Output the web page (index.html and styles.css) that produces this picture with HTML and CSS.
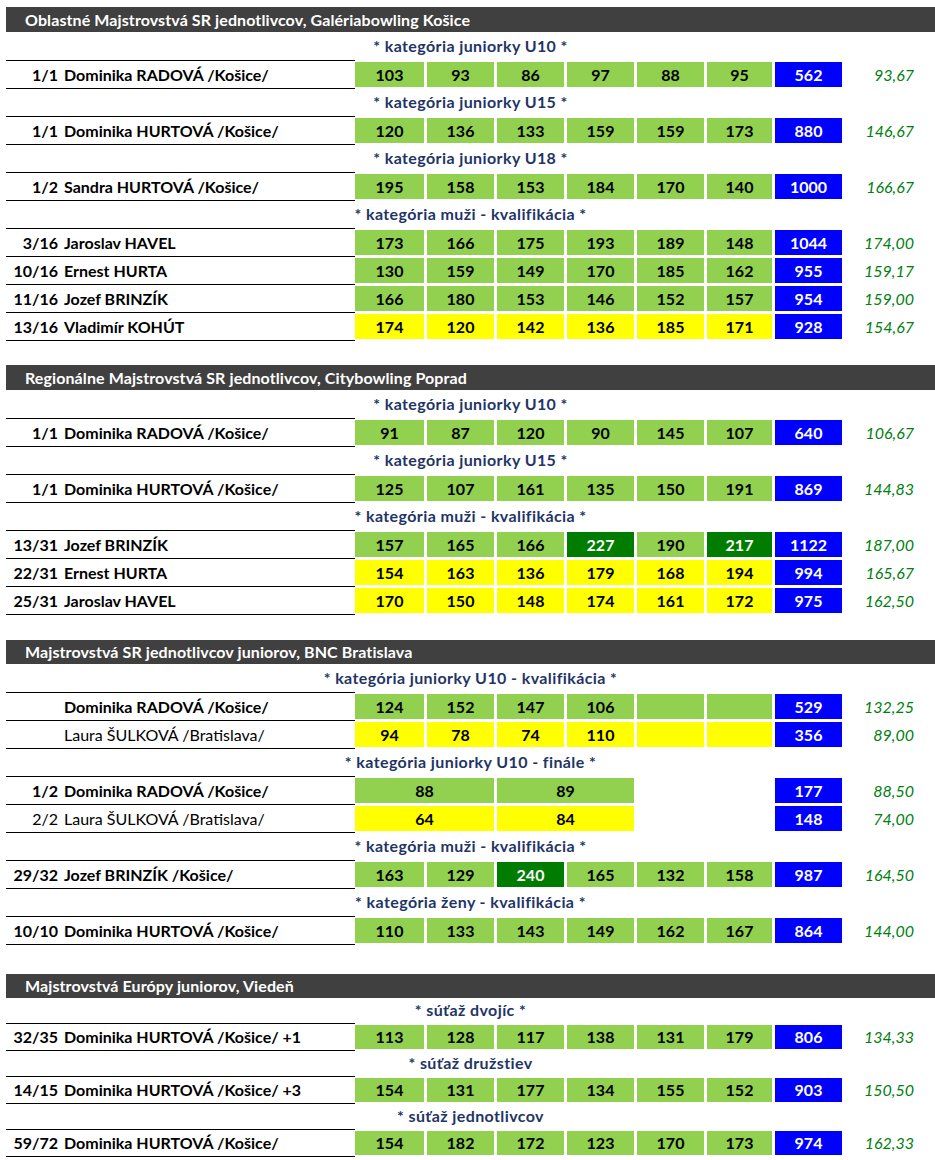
FILE: index.html
```html
<!DOCTYPE html>
<html lang="sk">
<head>
<meta charset="utf-8">
<title>Výsledky</title>
<link rel="stylesheet" href="styles.css">
</head>
<body>
<main class="page">

<section class="event">
  <h2 class="title">Oblastné Majstrovstvá SR jednotlivcov, Galériabowling Košice</h2>
  <div class="cat">* kategória juniorky U10 *</div>
  <div class="row"><div class="name"><span class="rank">1/1</span><span>Dominika RADOVÁ /Košice/</span></div>
    <span class="c g">103</span><span class="c g">93</span><span class="c g">86</span><span class="c g">97</span><span class="c g">88</span><span class="c g">95</span><span class="c sum">562</span><span class="avg">93,67</span></div>
  <div class="cat">* kategória juniorky U15 *</div>
  <div class="row"><div class="name"><span class="rank">1/1</span><span>Dominika HURTOVÁ /Košice/</span></div>
    <span class="c g">120</span><span class="c g">136</span><span class="c g">133</span><span class="c g">159</span><span class="c g">159</span><span class="c g">173</span><span class="c sum">880</span><span class="avg">146,67</span></div>
  <div class="cat">* kategória juniorky U18 *</div>
  <div class="row"><div class="name"><span class="rank">1/2</span><span>Sandra HURTOVÁ /Košice/</span></div>
    <span class="c g">195</span><span class="c g">158</span><span class="c g">153</span><span class="c g">184</span><span class="c g">170</span><span class="c g">140</span><span class="c sum">1000</span><span class="avg">166,67</span></div>
  <div class="cat">* kategória muži - kvalifikácia *</div>
  <div class="row"><div class="name"><span class="rank">3/16</span><span>Jaroslav HAVEL</span></div>
    <span class="c g">173</span><span class="c g">166</span><span class="c g">175</span><span class="c g">193</span><span class="c g">189</span><span class="c g">148</span><span class="c sum">1044</span><span class="avg">174,00</span></div>
  <div class="row"><div class="name"><span class="rank">10/16</span><span>Ernest HURTA</span></div>
    <span class="c g">130</span><span class="c g">159</span><span class="c g">149</span><span class="c g">170</span><span class="c g">185</span><span class="c g">162</span><span class="c sum">955</span><span class="avg">159,17</span></div>
  <div class="row"><div class="name"><span class="rank">11/16</span><span>Jozef BRINZÍK</span></div>
    <span class="c g">166</span><span class="c g">180</span><span class="c g">153</span><span class="c g">146</span><span class="c g">152</span><span class="c g">157</span><span class="c sum">954</span><span class="avg">159,00</span></div>
  <div class="row"><div class="name"><span class="rank">13/16</span><span>Vladimír KOHÚT</span></div>
    <span class="c y">174</span><span class="c y">120</span><span class="c y">142</span><span class="c y">136</span><span class="c y">185</span><span class="c y">171</span><span class="c sum">928</span><span class="avg">154,67</span></div>
</section>

<section class="event">
  <h2 class="title">Regionálne Majstrovstvá SR jednotlivcov, Citybowling Poprad</h2>
  <div class="cat">* kategória juniorky U10 *</div>
  <div class="row"><div class="name"><span class="rank">1/1</span><span>Dominika RADOVÁ /Košice/</span></div>
    <span class="c g">91</span><span class="c g">87</span><span class="c g">120</span><span class="c g">90</span><span class="c g">145</span><span class="c g">107</span><span class="c sum">640</span><span class="avg">106,67</span></div>
  <div class="cat">* kategória juniorky U15 *</div>
  <div class="row"><div class="name"><span class="rank">1/1</span><span>Dominika HURTOVÁ /Košice/</span></div>
    <span class="c g">125</span><span class="c g">107</span><span class="c g">161</span><span class="c g">135</span><span class="c g">150</span><span class="c g">191</span><span class="c sum">869</span><span class="avg">144,83</span></div>
  <div class="cat">* kategória muži - kvalifikácia *</div>
  <div class="row"><div class="name"><span class="rank">13/31</span><span>Jozef BRINZÍK</span></div>
    <span class="c g">157</span><span class="c g">165</span><span class="c g">166</span><span class="c dg">227</span><span class="c g">190</span><span class="c dg">217</span><span class="c sum">1122</span><span class="avg">187,00</span></div>
  <div class="row"><div class="name"><span class="rank">22/31</span><span>Ernest HURTA</span></div>
    <span class="c y">154</span><span class="c y">163</span><span class="c y">136</span><span class="c y">179</span><span class="c y">168</span><span class="c y">194</span><span class="c sum">994</span><span class="avg">165,67</span></div>
  <div class="row"><div class="name"><span class="rank">25/31</span><span>Jaroslav HAVEL</span></div>
    <span class="c y">170</span><span class="c y">150</span><span class="c y">148</span><span class="c y">174</span><span class="c y">161</span><span class="c y">172</span><span class="c sum">975</span><span class="avg">162,50</span></div>
</section>

<section class="event event--third">
  <h2 class="title">Majstrovstvá SR jednotlivcov juniorov, BNC Bratislava</h2>
  <div class="cat">* kategória juniorky U10 - kvalifikácia *</div>
  <div class="row"><div class="name"><span class="rank"></span><span>Dominika RADOVÁ /Košice/</span></div>
    <span class="c g">124</span><span class="c g">152</span><span class="c g">147</span><span class="c g">106</span><span class="c g"></span><span class="c g"></span><span class="c sum">529</span><span class="avg">132,25</span></div>
  <div class="row"><div class="name name--plain"><span class="rank"></span><span>Laura ŠULKOVÁ /Bratislava/</span></div>
    <span class="c y">94</span><span class="c y">78</span><span class="c y">74</span><span class="c y">110</span><span class="c y"></span><span class="c y"></span><span class="c sum">356</span><span class="avg">89,00</span></div>
  <div class="cat">* kategória juniorky U10 - finále *</div>
  <div class="row"><div class="name"><span class="rank">1/2</span><span>Dominika RADOVÁ /Košice/</span></div>
    <span class="c g span2">88</span><span class="c g span2">89</span><span class="c blank span2"></span><span class="c sum">177</span><span class="avg">88,50</span></div>
  <div class="row"><div class="name name--plain"><span class="rank">2/2</span><span>Laura ŠULKOVÁ /Bratislava/</span></div>
    <span class="c y span2">64</span><span class="c y span2">84</span><span class="c blank span2"></span><span class="c sum">148</span><span class="avg">74,00</span></div>
  <div class="cat">* kategória muži - kvalifikácia *</div>
  <div class="row"><div class="name"><span class="rank">29/32</span><span>Jozef BRINZÍK /Košice/</span></div>
    <span class="c g">163</span><span class="c g">129</span><span class="c dg">240</span><span class="c g">165</span><span class="c g">132</span><span class="c g">158</span><span class="c sum">987</span><span class="avg">164,50</span></div>
  <div class="cat">* kategória ženy - kvalifikácia *</div>
  <div class="row"><div class="name"><span class="rank">10/10</span><span>Dominika HURTOVÁ /Košice/</span></div>
    <span class="c g">110</span><span class="c g">133</span><span class="c g">143</span><span class="c g">149</span><span class="c g">162</span><span class="c g">167</span><span class="c sum">864</span><span class="avg">144,00</span></div>
</section>

<section class="event event--compact">
  <h2 class="title">Majstrovstvá Európy juniorov, Viedeň</h2>
  <div class="cat">* súťaž dvojíc *</div>
  <div class="row"><div class="name"><span class="rank">32/35</span><span>Dominika HURTOVÁ /Košice/ +1</span></div>
    <span class="c g">113</span><span class="c g">128</span><span class="c g">117</span><span class="c g">138</span><span class="c g">131</span><span class="c g">179</span><span class="c sum">806</span><span class="avg">134,33</span></div>
  <div class="cat">* súťaž družstiev</div>
  <div class="row"><div class="name"><span class="rank">14/15</span><span>Dominika HURTOVÁ /Košice/ +3</span></div>
    <span class="c g">154</span><span class="c g">131</span><span class="c g">177</span><span class="c g">134</span><span class="c g">155</span><span class="c g">152</span><span class="c sum">903</span><span class="avg">150,50</span></div>
  <div class="cat">* súťaž jednotlivcov</div>
  <div class="row"><div class="name"><span class="rank">59/72</span><span>Dominika HURTOVÁ /Košice/</span></div>
    <span class="c g">154</span><span class="c g">182</span><span class="c g">172</span><span class="c g">123</span><span class="c g">170</span><span class="c g">173</span><span class="c sum">974</span><span class="avg">162,33</span></div>
</section>

</main>
</body>
</html>
```

FILE: styles.css
```css
html, body {
  margin: 0;
  padding: 0;
  background: #ffffff;
}

body {
  font-family: "Lato", "DejaVu Sans", sans-serif;
  font-size: 16px;
  color: #000000;
}

.page {
  padding: 7px 0 0 6px;
  width: 929px;
}

.event + .event {
  margin-top: 24px;
}

.event--third {
  margin-top: 25px !important;
}

.event--compact {
  margin-top: 29px !important;
}

.title {
  margin: 0;
  height: 25px;
  box-sizing: border-box;
  padding: 0 0 1px 19px;
  background: #404040;
  color: #ffffff;
  font-size: 16px;
  font-weight: 700;
  letter-spacing: 0.1px;
  display: flex;
  align-items: center;
}

.event--third .title,
.event--compact .title {
  height: 24px;
}

.cat {
  height: 28px;
  box-sizing: border-box;
  padding-bottom: 3px;
  display: flex;
  align-items: center;
  justify-content: center;
  color: #1f3566;
  font-weight: 700;
  letter-spacing: 0.4px;
  background: linear-gradient(#000000, #000000) 0 100% / 349px 1px no-repeat;
}

.title + .cat {
  height: 29px;
}

.row {
  display: grid;
  grid-template-columns: 346px 69px 67px 67px 67px 67px 65px 67px 1fr;
  column-gap: 3px;
  height: 28px;
  align-items: center;
}

.name {
  align-self: stretch;
  margin-right: -3px;
  padding-bottom: 1px;
  border-bottom: 1px solid #000000;
  display: flex;
  align-items: center;
  gap: 6px;
  font-weight: 700;
  white-space: nowrap;
}

.name--plain {
  font-weight: 400;
}

.rank {
  width: 52px;
  text-align: right;
  flex: none;
}

.c {
  height: 25px;
  margin-top: -1px;
  box-sizing: border-box;
  padding-bottom: 1px;
  display: flex;
  align-items: center;
  justify-content: center;
  font-weight: 700;
}

.span2 {
  grid-column: span 2;
}

.g { background: #92d050; }
.y { background: #ffff00; }
.dg { background: #007d00; color: #ffffff; }
.sum { background: #0000ff; color: #ffffff; }
.blank { background: transparent; }

.avg {
  text-align: right;
  padding-right: 21px;
  color: #00800f;
  font-style: italic;
  margin-top: -2px;
}

.event--compact .cat { height: 26px; }
.event--compact .title + .cat { height: 26px; }
.event--compact .row { height: 27px; }
.event--compact .c { height: 24px; }
```
